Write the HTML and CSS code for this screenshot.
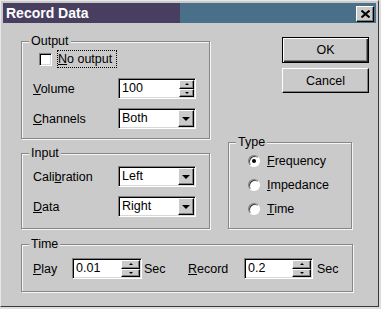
FILE: index.html
```html
<!DOCTYPE html>
<html>
<head>
	<title>Record Data</title>
	<meta charset="UTF-8">
	<link rel="stylesheet" href="styles.css">
</head>
<body>
	<div class="window">
		<div class="titlebar">
			<span class="title">Record Data</span>
			<span class="close"><svg width="9" height="8" viewBox="0 0 9 8"><path d="M0.5 0.5L8.5 7.5M8.5 0.5L0.5 7.5" stroke="#000" stroke-width="2"/></svg></span>
		</div>
		<div class="dialog">
			<div class="top">
				<div class="colLeft">
					<div class="group groupOutput">
						<div class="groupTitle">Output</div>
						<div class="checkRow">
							<span class="checkbox"></span>
							<span class="focus"><u>N</u>o output</span>
						</div>
						<div class="fieldRow rowVolume">
							<span class="label"><u>V</u>olume</span>
							<div class="edit spin">
								<span class="value">100</span>
								<span class="spinBtns"><span class="sbtn"><i class="up"></i></span><span class="sbtn"><i class="down"></i></span></span>
							</div>
						</div>
						<div class="fieldRow rowNext">
							<span class="label"><u>C</u>hannels</span>
							<div class="edit combo">
								<span class="value">Both</span>
								<span class="dropBtn"><i class="arrow"></i></span>
							</div>
						</div>
					</div>
					<div class="group groupInput">
						<div class="groupTitle">Input</div>
						<div class="fieldRow rowCal">
							<span class="label">Cali<u>b</u>ration</span>
							<div class="edit combo">
								<span class="value">Left</span>
								<span class="dropBtn"><i class="arrow"></i></span>
							</div>
						</div>
						<div class="fieldRow rowNext">
							<span class="label"><u>D</u>ata</span>
							<div class="edit combo">
								<span class="value">Right</span>
								<span class="dropBtn"><i class="arrow"></i></span>
							</div>
						</div>
					</div>
				</div>
				<div class="colRight">
					<div class="btn btnOk">OK</div>
					<div class="btn btnCancel">Cancel</div>
					<div class="group groupType">
						<div class="groupTitle">Type</div>
						<div class="radioRow"><span class="radio on"></span><span class="radioText"><u>F</u>requency</span></div>
						<div class="radioRow"><span class="radio"></span><span class="radioText"><u>I</u>mpedance</span></div>
						<div class="radioRow"><span class="radio"></span><span class="radioText"><u>T</u>ime</span></div>
					</div>
				</div>
			</div>
			<div class="group groupTime">
				<div class="groupTitle">Time</div>
				<div class="timeRow">
					<span class="tPlay"><u>P</u>lay</span>
					<div class="edit spin spinPlay">
						<span class="value">0.01</span>
						<span class="spinBtns wide"><span class="sbtn"><i class="up"></i></span><span class="sbtn"><i class="down"></i></span></span>
					</div>
					<span class="sec secPlay">Sec</span>
					<span class="tRecord"><u>R</u>ecord</span>
					<div class="edit spin spinRecord">
						<span class="value">0.2</span>
						<span class="spinBtns wide"><span class="sbtn"><i class="up"></i></span><span class="sbtn"><i class="down"></i></span></span>
					</div>
					<span class="sec secRecord">Sec</span>
				</div>
			</div>
		</div>
	</div>
</body>
</html>
```

FILE: styles.css
```css
*{
	margin: 0;
	padding: 0;
	box-sizing: border-box;
}
body{
	background: #dedede;
	font-family: "Liberation Sans", Arial, sans-serif;
	font-size: 12.5px;
	color: #000;
}
i{
	display: block;
}
.window{
	width: 379px;
	height: 307px;
	background: #cacaca;
	border: 1px solid;
	border-color: #e8e8e8 #3a3a3a #3a3a3a #e8e8e8;
	padding: 2px;
	display: flex;
	flex-direction: column;
}
.titlebar{
	height: 20px;
	background-color: #4a6f88;
	display: flex;
	align-items: center;
	padding-right: 2px;
}
.title{
	width: 177px;
	height: 20px;
	line-height: 20px;
	padding-left: 3px;
	background-color: #483e5f;
	color: #fff;
	font-weight: bold;
	font-size: 14px;
}
.close{
	width: 18px;
	height: 16px;
	margin: 2px 0 0 auto;
	background: #cacaca;
	border: 1px solid;
	border-color: #fff #000 #000 #fff;
	box-shadow: inset -1px -1px 0 #808080;
	display: flex;
	align-items: center;
	justify-content: center;
}
.dialog{
	padding: 11px 0 0 18px;
}
.top{
	display: flex;
	gap: 18px;
}
.colLeft{
	width: 189px;
	display: flex;
	flex-direction: column;
	gap: 7px;
}
.colRight{
	width: 141px;
	display: flex;
	flex-direction: column;
}
.group{
	border: 1px solid #878787;
	box-shadow: inset 1px 1px 0 #f6f6f6, 1px 1px 0 #f6f6f6;
	margin-top: 7px;
}
.groupTitle{
	margin: -8px 0 0 7px;
	padding: 0 2px;
	width: fit-content;
	height: 14px;
	line-height: 14px;
	background: #cacaca;
}
.groupOutput{
	height: 98px;
}
.groupInput{
	height: 76px;
}
.checkRow{
	margin: 2px 0 0 17px;
	height: 18px;
	display: flex;
	align-items: center;
	gap: 5px;
}
.checkbox{
	width: 13px;
	height: 13px;
	background: #fff;
	border: 1px solid;
	border-color: #808080 #fff #fff #808080;
	box-shadow: inset 1px 1px 0 #000, inset -1px -1px 0 #d8d8d8;
}
.focus{
	height: 18px;
	line-height: 16px;
	border: 1px dotted #000;
	padding: 0 4px 0 0;
}
.fieldRow{
	height: 21px;
	display: flex;
	align-items: center;
	padding-left: 11px;
}
.rowVolume{
	margin-top: 10px;
}
.rowNext{
	margin-top: 9px;
}
.rowCal{
	margin-top: 6px;
}
.label{
	width: 85px;
}
.edit{
	height: 21px;
	width: 78px;
	background: #fff;
	border: 1px solid;
	border-color: #808080 #fff #fff #808080;
	box-shadow: inset 1px 1px 0 #000, inset -1px -1px 0 #d8d8d8;
	padding: 1px;
	display: flex;
}
.value{
	flex: 1;
	padding-left: 2px;
	line-height: 17px;
}
.spinBtns{
	width: 15px;
	display: flex;
	flex-direction: column;
}
.spinBtns.wide{
	width: 19px;
}
.sbtn{
	flex: 1;
	background: #cacaca;
	border: 1px solid;
	border-color: #fff #000 #000 #fff;
	box-shadow: inset -1px -1px 0 #808080;
	display: flex;
	align-items: center;
	justify-content: center;
}
.up{
	border-left: 2px solid transparent;
	border-right: 2px solid transparent;
	border-bottom: 2px solid #000;
}
.down{
	border-left: 2px solid transparent;
	border-right: 2px solid transparent;
	border-top: 2px solid #000;
}
.dropBtn{
	width: 16px;
	background: #cacaca;
	border: 1px solid;
	border-color: #fff #000 #000 #fff;
	box-shadow: inset -1px -1px 0 #808080;
	display: flex;
	align-items: center;
	justify-content: center;
}
.arrow{
	border-left: 4px solid transparent;
	border-right: 4px solid transparent;
	border-top: 4px solid #000;
}
.btn{
	align-self: flex-end;
	width: 87px;
	background: #cacaca;
	display: flex;
	align-items: center;
	justify-content: center;
}
.btnOk{
	margin-top: 3px;
	height: 26px;
	border: 1px solid #000;
	box-shadow: inset 1px 1px 0 #fff, inset -1px -1px 0 #2a2a2a, inset -2px -2px 0 #808080;
}
.btnCancel{
	margin-top: 5px;
	height: 25px;
	border: 1px solid;
	border-color: #fff #000 #000 #fff;
	box-shadow: inset -1px -1px 0 #808080;
}
.groupType{
	margin-top: auto;
	width: 124px;
	height: 87px;
}
.radioRow{
	height: 24px;
	display: flex;
	align-items: center;
	padding-left: 19px;
	gap: 7px;
}
.radio{
	width: 12px;
	height: 12px;
	border-radius: 50%;
	background: #fff;
	border: 1px solid;
	border-color: #808080 #fff #fff #808080;
	box-shadow: inset 1px 1px 0 #404040;
	display: flex;
	align-items: center;
	justify-content: center;
}
.radio.on::after{
	content: '';
	width: 4px;
	height: 4px;
	border-radius: 50%;
	background: #000;
}
.groupTime{
	margin-top: 15px;
	width: 332px;
	height: 48px;
}
.timeRow{
	margin-top: 7px;
	height: 21px;
	display: flex;
	align-items: center;
	padding-left: 11px;
}
.tPlay{
	width: 39px;
}
.spinPlay{
	width: 70px;
}
.spinRecord{
	width: 69px;
}
.secPlay{
	margin-left: 2px;
	width: 44px;
}
.tRecord{
	width: 56px;
}
.secRecord{
	margin-left: 4px;
}
```
